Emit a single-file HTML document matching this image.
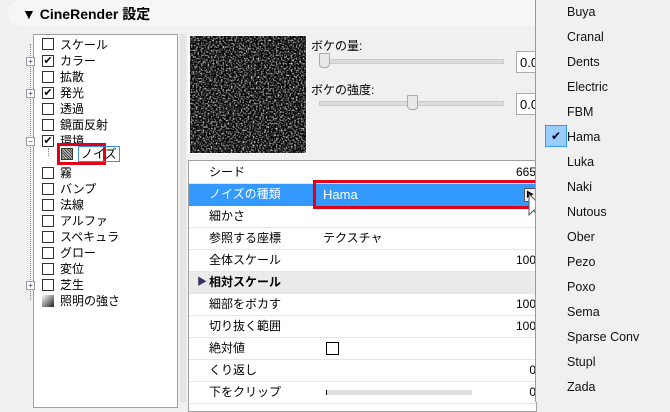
<!DOCTYPE html>
<html><head><meta charset="utf-8"><style>
body{margin:0;width:670px;height:402px;overflow:hidden;background:#f0f0f0;font-family:"Liberation Sans","Noto Sans CJK JP",sans-serif;font-size:12px;color:#000;position:relative}
.abs{position:absolute}
.hdr{left:8px;top:0;width:540px;height:26px;background:#f6f6f6;border-radius:13px}
.tree{left:33px;top:34px;width:143px;height:372px;background:#fff;border:1px solid #a0a0a0}
.tr{position:absolute;height:16px;line-height:16px;font-size:12px;white-space:nowrap}
.cb{position:absolute;width:10px;height:10px;border:1px solid #333;background:#fff}
.props{left:188px;top:160px;width:347px;height:250px;background:#fff;border:1px solid #a0a0a0}
.row{position:absolute;left:0;width:347px;height:21px;border-bottom:1px solid #e6e6e6;line-height:21px;white-space:nowrap}
.row .l{position:absolute;left:20px}
.row .r{position:absolute;right:0}
.menu{left:535px;top:0;width:135px;height:402px;background:#f0f0f0;border-left:1px solid #999}
.mi{position:absolute;left:31px;font-size:12.5px;color:#111;white-space:nowrap}
.pm{position:absolute;left:26px;width:7px;height:7px;border:1px solid #999;background:#fff;font-size:8px;line-height:7px;text-align:center;color:#336}
</style></head><body>
<div class="abs hdr"></div>
<div class="abs" style="left:22px;top:4px;font-weight:bold;font-size:14px;white-space:nowrap">▼ CineRender 設定</div>
<div class="abs" style="left:180px;top:34px;width:6px;height:368px;background:#e4e4e4"></div>
<div class="abs tree"></div>
<div class="abs" style="left:30px;top:44px;height:256px;border-left:1px dotted #888"></div>
<div class="abs" style="left:48px;top:148px;height:8px;border-left:1px dotted #888"></div>
<div class="abs" style="left:0;top:0;width:200px;height:402px">
 <div class="abs" style="left:42px;top:38px;width:10px;height:10px;border:1px solid #333"></div>
 <div class="tr" style="left:60px;top:37px">スケール</div>
 <div class="cb" style="left:42px;top:55px;text-align:center;line-height:10px;font-size:11px">✔</div><div class="tr" style="left:60px;top:53px">カラー</div>
 <div class="cb" style="left:42px;top:71px"></div><div class="tr" style="left:60px;top:69px">拡散</div>
 <div class="cb" style="left:42px;top:87px;text-align:center;line-height:10px;font-size:11px">✔</div><div class="tr" style="left:60px;top:85px">発光</div>
 <div class="cb" style="left:42px;top:103px"></div><div class="tr" style="left:60px;top:101px">透過</div>
 <div class="cb" style="left:42px;top:119px"></div><div class="tr" style="left:60px;top:117px">鏡面反射</div>
 <div class="cb" style="left:42px;top:135px;text-align:center;line-height:10px;font-size:11px">✔</div><div class="tr" style="left:60px;top:133px">環境</div>
 <div class="abs" style="left:57px;top:143px;width:49px;height:22px;border:3px solid #e0001a;box-sizing:border-box"></div>
 <div class="abs" style="left:61px;top:148px;width:10px;height:10px;border:1px solid #333;background:repeating-linear-gradient(45deg,#444 0 1px,#ccc 1px 2px)"></div>
 <div class="tr" style="left:78px;top:146px;border:1px solid #3a8ee6;padding:0 2px;line-height:14px;height:14px">ノイズ</div>
 <div class="cb" style="left:42px;top:167px"></div><div class="tr" style="left:60px;top:165px">霧</div>
 <div class="cb" style="left:42px;top:183px"></div><div class="tr" style="left:60px;top:181px">バンプ</div>
 <div class="cb" style="left:42px;top:199px"></div><div class="tr" style="left:60px;top:197px">法線</div>
 <div class="cb" style="left:42px;top:215px"></div><div class="tr" style="left:60px;top:213px">アルファ</div>
 <div class="cb" style="left:42px;top:231px"></div><div class="tr" style="left:60px;top:229px">スペキュラ</div>
 <div class="cb" style="left:42px;top:247px"></div><div class="tr" style="left:60px;top:245px">グロー</div>
 <div class="cb" style="left:42px;top:263px"></div><div class="tr" style="left:60px;top:261px">変位</div>
 <div class="cb" style="left:42px;top:279px"></div><div class="tr" style="left:60px;top:277px">芝生</div>
 <div class="abs" style="left:42px;top:295px;width:12px;height:12px;background:linear-gradient(135deg,#fff,#222)"></div><div class="tr" style="left:60px;top:293px">照明の強さ</div>
 <div class="pm" style="top:57px">+</div>
 <div class="pm" style="top:89px">+</div>
 <div class="pm" style="top:137px">−</div>
 <div class="pm" style="top:281px">+</div>
</div>

<svg class="abs" style="left:188px;top:35px" width="119" height="119">
<filter id="n" x="0" y="0" width="100%" height="100%" color-interpolation-filters="sRGB"><feTurbulence type="fractalNoise" baseFrequency="0.6" numOctaves="2" seed="3"/><feColorMatrix type="matrix" values="2.2 0 0 0 -0.95  2.2 0 0 0 -0.95  2.2 0 0 0 -0.95  0 0 0 0 1"/></filter>
<rect width="119" height="119" fill="#fff"/>
<rect x="2" y="1" width="116" height="117" filter="url(#n)"/>
</svg>
<div class="abs" style="left:311px;top:37px;white-space:nowrap">ボケの量:</div>
<div class="abs" style="left:319px;top:59px;width:183px;height:3px;background:#dcdcdc;border:1px solid #ccc"></div>
<div class="abs" style="left:319px;top:53px;width:9px;height:13px;background:#e8e8e8;border:1px solid #aaa;border-radius:1px 1px 4px 4px"></div>
<div class="abs" style="left:516px;top:51px;width:20px;height:22px;background:#fff;border:1px solid #aaa;font-size:13px;line-height:22px;padding-left:3px;box-sizing:border-box;overflow:hidden">0.0</div>
<div class="abs" style="left:311px;top:81px;white-space:nowrap">ボケの強度:</div>
<div class="abs" style="left:319px;top:101px;width:183px;height:3px;background:#dcdcdc;border:1px solid #ccc"></div>
<div class="abs" style="left:407px;top:95px;width:9px;height:13px;background:#e8e8e8;border:1px solid #aaa;border-radius:1px 1px 4px 4px"></div>
<div class="abs" style="left:516px;top:93px;width:20px;height:22px;background:#fff;border:1px solid #aaa;font-size:13px;line-height:22px;padding-left:3px;box-sizing:border-box;overflow:hidden">0.0</div>

<div class="abs props">
 <div class="row" style="top:1px"><span class="l">シード</span><span class="r">665</span></div>
 <div class="row" style="top:23px;background:#3399ff;color:#fff;border:0;height:22px"><span class="l">ノイズの種類</span><span class="abs" style="left:134px;font-size:13px">Hama</span>
  <div class="abs" style="left:335px;top:4px;width:10px;height:12px;background:#eee;border:1px solid #555;font-size:8px;line-height:12px;color:#000;text-align:center">▶</div></div>
 <div class="row" style="top:45px"><span class="l">細かさ</span></div>
 <div class="row" style="top:67px"><span class="l">参照する座標</span><span class="abs" style="left:134px">テクスチャ</span></div>
 <div class="row" style="top:89px"><span class="l">全体スケール</span><span class="r">100</span></div>
 <div class="row" style="top:111px;background:#ebebeb;font-weight:bold"><span class="abs" style="left:8px;color:#336;font-size:10px">▶</span><span class="l">相対スケール</span></div>
 <div class="row" style="top:133px"><span class="l">細部をボカす</span><span class="r">100</span></div>
 <div class="row" style="top:155px"><span class="l">切り抜く範囲</span><span class="r">100</span></div>
 <div class="row" style="top:177px"><span class="l">絶対値</span><span class="abs" style="left:137px;top:4px;width:11px;height:11px;border:1px solid #000"></span></div>
 <div class="row" style="top:199px"><span class="l">くり返し</span><span class="r">0</span></div>
 <div class="row" style="top:221px"><span class="l">下をクリップ</span><span class="abs" style="left:137px;top:8px;width:145px;height:5px;background:#e0e0e0;border-left:1px solid #000"></span><span class="r">0</span></div>
</div>
<div class="abs" style="left:313px;top:180px;width:230px;height:29px;border:3px solid #e0001a;box-sizing:border-box"></div>
<svg class="abs" style="left:528px;top:193px" width="20" height="32"><path d="M1 1 L1 22 L6 17 L10 26 L13 25 L9 16 L16 16 Z" fill="#fff" stroke="#555" stroke-width="1"/></svg>

<div class="abs menu">
 <div class="abs" style="left:9px;top:125px;width:20px;height:20px;background:#99ccff;border:1px solid #3399ff;text-align:center;line-height:20px;font-size:12px">✔</div>
 <div class="mi" style="top:5px">Buya</div>
 <div class="mi" style="top:30px">Cranal</div>
 <div class="mi" style="top:55px">Dents</div>
 <div class="mi" style="top:80px">Electric</div>
 <div class="mi" style="top:105px">FBM</div>
 <div class="mi" style="top:130px">Hama</div>
 <div class="mi" style="top:155px">Luka</div>
 <div class="mi" style="top:180px">Naki</div>
 <div class="mi" style="top:205px">Nutous</div>
 <div class="mi" style="top:230px">Ober</div>
 <div class="mi" style="top:255px">Pezo</div>
 <div class="mi" style="top:280px">Poxo</div>
 <div class="mi" style="top:305px">Sema</div>
 <div class="mi" style="top:330px">Sparse Conv</div>
 <div class="mi" style="top:355px">Stupl</div>
 <div class="mi" style="top:380px">Zada</div>
</div>
</body></html>
